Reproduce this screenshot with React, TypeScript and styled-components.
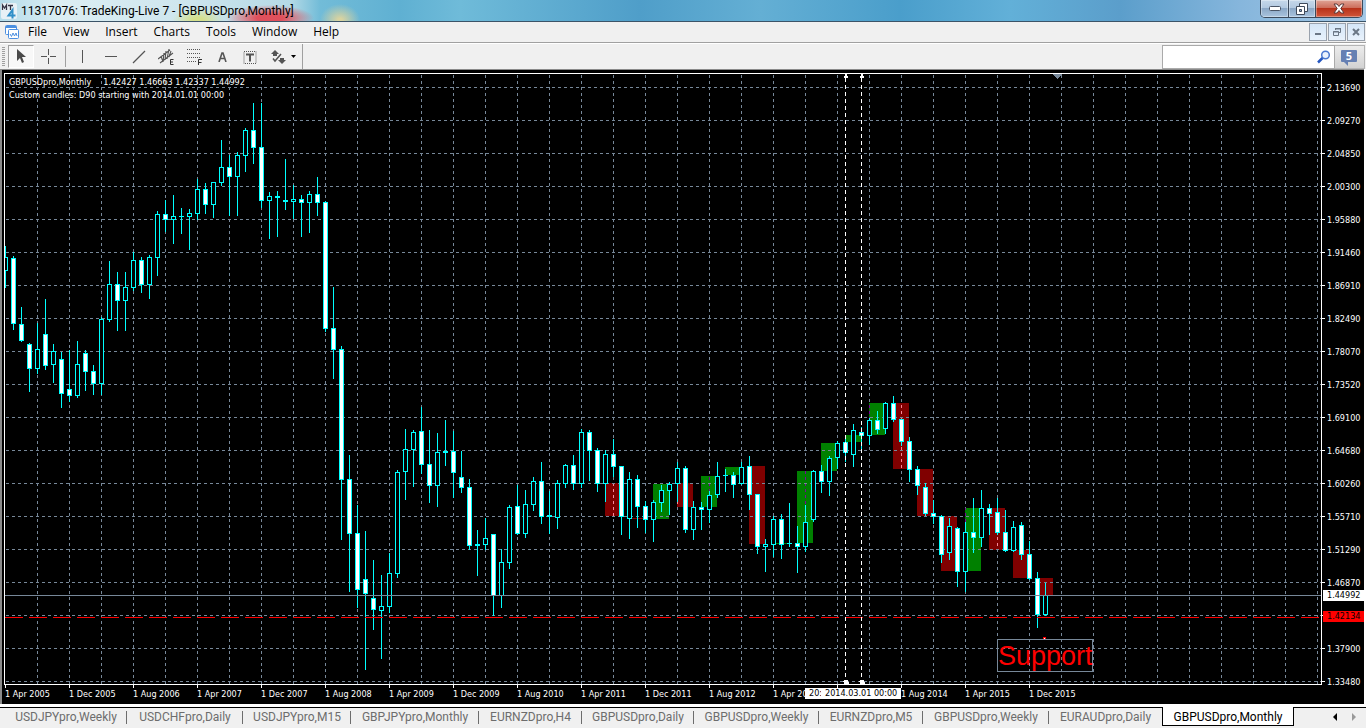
import React from "react";
import styled, { createGlobalStyle } from "styled-components";

/* ---------- data ---------- */

// [high, body top, body bottom, low, filled] for consecutive months, 8px apart
type Candle = [number, number, number, number, 0 | 1];

const candles: Candle[] = [
  [246, 257, 271, 288, 0], [256, 258, 324, 330, 1], [307, 324, 341, 342, 1], [343, 344, 369, 392, 1],
  [323, 349, 369, 374, 0], [299, 334, 366, 370, 1], [344, 351, 365, 383, 0], [352, 359, 394, 408, 1],
  [350, 389, 396, 402, 1], [341, 364, 396, 398, 0], [350, 353, 372, 391, 1], [365, 371, 384, 395, 1],
  [317, 319, 384, 395, 0], [261, 284, 320, 322, 0], [272, 284, 301, 331, 1], [272, 287, 301, 331, 0],
  [252, 260, 288, 291, 0], [257, 260, 285, 293, 1], [255, 257, 285, 299, 0], [211, 214, 258, 276, 0],
  [200, 214, 220, 232, 1], [195, 216, 220, 244, 0], [208, 216, 217, 234, 0], [209, 213, 217, 250, 0],
  [179, 189, 214, 220, 0], [183, 189, 205, 214, 1], [182, 182, 205, 218, 0], [140, 167, 183, 186, 0],
  [155, 167, 177, 216, 1], [152, 155, 177, 216, 0], [128, 130, 156, 172, 0], [103, 130, 148, 164, 1],
  [103, 147, 201, 208, 1], [192, 196, 201, 239, 0], [191, 196, 198, 237, 0], [159, 200, 202, 210, 0],
  [185, 199, 202, 219, 0], [195, 199, 203, 237, 1], [191, 194, 203, 233, 0], [177, 194, 203, 216, 1],
  [201, 202, 329, 332, 1], [287, 328, 350, 379, 1], [346, 349, 480, 540, 1], [455, 479, 534, 592, 1],
  [505, 533, 590, 608, 1], [531, 579, 594, 670, 1], [560, 598, 610, 630, 1], [575, 606, 611, 659, 0],
  [553, 573, 607, 613, 0], [470, 472, 574, 578, 0], [429, 449, 472, 500, 0], [430, 432, 450, 487, 0],
  [407, 431, 465, 474, 1], [430, 464, 486, 503, 1], [433, 452, 486, 507, 0], [420, 451, 453, 466, 0],
  [431, 451, 473, 498, 1], [451, 477, 488, 493, 1], [479, 487, 546, 550, 1], [530, 544, 546, 576, 0],
  [518, 538, 545, 550, 0], [534, 534, 596, 616, 1], [549, 562, 596, 608, 0], [505, 507, 563, 569, 0],
  [485, 506, 534, 535, 1], [490, 504, 534, 538, 0], [477, 481, 505, 511, 0], [462, 481, 517, 524, 1],
  [491, 515, 517, 534, 0], [480, 483, 518, 529, 0], [464, 465, 484, 488, 0], [455, 465, 484, 490, 1],
  [429, 432, 484, 488, 0], [430, 432, 451, 481, 1], [448, 450, 484, 492, 1], [450, 454, 484, 502, 0],
  [439, 454, 467, 477, 1], [466, 466, 517, 535, 1], [472, 479, 519, 539, 0], [475, 479, 507, 528, 1],
  [501, 506, 520, 533, 1], [500, 502, 520, 542, 0], [485, 490, 503, 512, 0], [482, 484, 491, 515, 0],
  [462, 468, 484, 502, 0], [466, 468, 530, 533, 1], [501, 507, 530, 540, 0], [502, 507, 510, 530, 1],
  [491, 495, 510, 523, 0], [462, 476, 495, 498, 0], [469, 475, 476, 492, 0], [472, 475, 485, 498, 1],
  [462, 467, 484, 485, 0], [456, 466, 495, 510, 1], [494, 494, 547, 554, 1], [539, 544, 547, 572, 0],
  [516, 519, 545, 557, 0], [514, 519, 545, 559, 1], [503, 543, 544, 547, 0], [526, 543, 547, 573, 1],
  [505, 522, 547, 552, 0], [470, 471, 520, 522, 0], [465, 471, 482, 493, 1], [456, 458, 482, 496, 0],
  [441, 443, 458, 469, 0], [437, 442, 453, 462, 1], [424, 430, 455, 467, 0], [427, 432, 436, 450, 1],
  [418, 420, 436, 445, 0], [411, 420, 430, 434, 1], [402, 403, 429, 434, 0], [396, 403, 420, 422, 1],
  [419, 419, 442, 446, 1], [437, 441, 470, 482, 1], [466, 469, 486, 495, 1], [483, 487, 514, 516, 1],
  [500, 513, 517, 524, 1], [515, 516, 555, 563, 1], [518, 526, 553, 560, 0], [527, 528, 572, 587, 1],
  [522, 532, 572, 592, 0], [498, 532, 538, 553, 1], [490, 508, 538, 547, 0], [504, 508, 514, 535, 1],
  [498, 512, 533, 535, 1], [510, 532, 551, 552, 1], [521, 527, 551, 552, 0], [522, 525, 555, 560, 1],
  [541, 554, 579, 580, 1], [572, 578, 615, 628, 1], [583, 595, 615, 616, 0],
];

// Quarterly custom candles: [left, top, bottom, rising]
type Quarter = [number, number, number, boolean];

const quarters: Quarter[] = [
  [605, 483, 516, false], [629, 518, 519, false], [653, 484, 519, true], [677, 483, 507, false],
  [701, 476, 507, true], [725, 467, 475, true], [749, 466, 544, false], [773, 543, 544, true],
  [797, 471, 543, true], [821, 443, 471, true], [845, 435, 442, true], [869, 403, 435, true],
  [893, 403, 469, false], [917, 469, 516, false], [941, 516, 571, false], [965, 508, 571, true],
  [989, 508, 550, false], [1013, 550, 578, false], [1037, 578, 595, false],
];

const prices = [
  "2.13690", "2.09270", "2.04850", "2.00300", "1.95880", "1.91460", "1.86910", "1.82490", "1.78070",
  "1.73520", "1.69100", "1.64680", "1.60260", "1.55710", "1.51290", "1.46870", "", "1.37900", "1.33480",
];

const dates = [
  "1 Apr 2005", "1 Dec 2005", "1 Aug 2006", "1 Apr 2007", "1 Dec 2007", "1 Aug 2008", "1 Apr 2009",
  "1 Dec 2009", "1 Aug 2010", "1 Apr 2011", "1 Dec 2011", "1 Aug 2012", "1 Apr 20", "",
  "1 Aug 2014", "1 Apr 2015", "1 Dec 2015",
];

const tabs = [
  { name: "USDJPYpro,Weekly", width: 122 },
  { name: "USDCHFpro,Daily", width: 116 },
  { name: "USDJPYpro,M15", width: 108 },
  { name: "GBPJPYpro,Monthly", width: 128 },
  { name: "EURNZDpro,H4", width: 103 },
  { name: "GBPUSDpro,Daily", width: 112 },
  { name: "GBPUSDpro,Weekly", width: 125 },
  { name: "EURNZDpro,M5", width: 104 },
  { name: "GBPUSDpro,Weekly", width: 126 },
  { name: "EURAUDpro,Daily", width: 113 },
  { name: "GBPUSDpro,Monthly", width: 132 },
];

const menus = ["File", "View", "Insert", "Charts", "Tools", "Window", "Help"];

const GRID = "#778899";
const gridXs = Array.from({ length: 60 }, (_, i) => 37 + i * 32);
const gridYs = Array.from({ length: 19 }, (_, i) => 87 + i * 33);

/* ---------- styles ---------- */

const uiFont = `"Open Sans", "Noto Sans", sans-serif`;
const labelFont = `Roboto, "Open Sans", sans-serif`;
const chartFont = `"DejaVu Sans Condensed", "DejaVu Sans", sans-serif`;

const Global = createGlobalStyle`
  * { box-sizing: border-box; }
  body { margin: 0; background: #f0f0f0; font-family: ${uiFont}; font-size: 12px; color: #000; }
  button, input { font: inherit; color: inherit; margin: 0; padding: 0; }
  svg { display: block; }
`;

const Window = styled.div`
  display: flex;
  flex-direction: column;
  min-height: 100vh;
  overflow: hidden;
`;

const TitleBar = styled.header`
  display: flex;
  align-items: flex-start;
  height: 22px;
  padding: 0 3px 0 1px;
  border-bottom: 1px solid #3c5468;
  background:
    radial-gradient(ellipse 20px 16px at 340px 20px, #d9d3a0 10%, transparent),
    radial-gradient(ellipse 44px 13px at 270px 18px, #e0505c 30%, transparent),
    radial-gradient(ellipse 26px 12px at 198px 20px, #d5e08c 20%, transparent),
    linear-gradient(90deg, #b4dcea 0, #dceef3 60px, #cfe6ee 180px, #b5dae6 290px, #72bcd8 320px, #5fb0d2 400px,
      #6fbbd9 460px, #4f9ec9 640px, #64afd4 760px, #4a9ecb 900px, #62b0d8 1010px, #5b9ecb 1120px, #86b6dc 1240px, #a4c8e6 100%);
`;

const AppIcon = styled.svg`
  flex: none;
  width: 16px;
  height: 16px;
  margin: 3px 4px 0 0;
`;

const Title = styled.h1`
  flex: 1;
  margin: 0;
  font-family: ${labelFont};
  font-size: 12px;
  line-height: 22px;
  font-weight: 400;
  white-space: nowrap;
`;

const WindowButtons = styled.div`
  display: flex;
  border: 1px solid #3b4a5c;
  border-top: 0;
  border-radius: 0 0 5px 5px;
  overflow: hidden;
`;

const WindowButton = styled.button<{ $danger?: boolean }>`
  display: grid;
  place-items: center;
  width: ${(p) => (p.$danger ? 47 : 27)}px;
  height: 17px;
  border: 0;
  box-shadow: inset 0 0 0 1px rgba(255, 255, 255, 0.35);
  background: ${(p) =>
    p.$danger
      ? "linear-gradient(#e0a597 0, #cd6e5c 45%, #b8321a 50%, #d0563a 100%)"
      : "linear-gradient(#c6d8ea 0, #b3c9e0 45%, #8ca8c6 50%, #a9c4de 100%)"};

  & + & {
    border-left: 1px solid #3b4a5c;
  }
`;

const MenuBar = styled.nav`
  display: flex;
  align-items: center;
  height: 21px;
  padding: 0 1px 0 5px;
  border-bottom: 1px solid #a0a0a0;
  background: #f0f0f0;
`;

const MenuList = styled.ul`
  display: flex;
  flex: 1;
  gap: 16px;
  margin: 0 0 0 9px;
  padding: 0;
  list-style: none;
`;

const MenuButton = styled.button`
  display: block;
  border: 0;
  background: none;
  line-height: 18px;
`;

const ChildButtons = styled.div`
  display: flex;
  gap: 1px;
`;

const ChildButton = styled.button`
  display: grid;
  place-items: center;
  width: 18px;
  height: 18px;
  border: 1px solid #9aa2ad;
  background: linear-gradient(#d5e6f7, #e8f2fc);
`;

const Toolbar = styled.div`
  display: flex;
  align-items: center;
  height: 26px;
  padding-right: 1px;
  border-top: 1px solid #fff;
  background: #f0f0f0;
`;

const Grip = styled.div`
  width: 3px;
  height: 20px;
  margin: 0 3px 0 2px;
  background: repeating-linear-gradient(#a0a0a0 0 1px, transparent 1px 2px);
`;

const ToolButton = styled.button<{ $active?: boolean }>`
  display: grid;
  place-items: center;
  width: ${(p) => (p.$active ? 26 : 28)}px;
  height: 23px;
  border: ${(p) => (p.$active ? 1 : 0)}px solid;
  border-color: #a0a0a0 #fff #fff #a0a0a0;
  background: ${(p) => (p.$active ? "#f8f8f8" : "none")};
`;

const Caret = styled.button`
  display: grid;
  place-items: center;
  width: 8px;
  height: 23px;
  margin-left: -3px;
  border: 0;
  background: none;
`;

const Divider = styled.div<{ $tall?: boolean }>`
  width: 1px;
  height: ${(p) => (p.$tall ? 25 : 21)}px;
  margin: 0 2px 0 ${(p) => (p.$tall ? 5 : 3)}px;
  background: #a0a0a0;
`;

const Search = styled.div`
  display: flex;
  align-items: center;
  width: 173px;
  height: 24px;
  margin-left: auto;
  padding-right: 3px;
  border: 1px solid #aaa;
  background: #fff;
`;

const SearchInput = styled.input`
  flex: 1;
  min-width: 0;
  border: 0;
  outline: 0;
  padding: 0 4px;
  background: none;
`;

const PlainButton = styled.button`
  display: grid;
  place-items: center;
  border: 0;
  background: none;
`;

const ChatButton = styled.button`
  display: grid;
  place-items: center;
  width: 30px;
  height: 24px;
  padding: 0 1px 2px 0;
  border: 1px solid #b4b4b4;
  border-left: 0;
  background: linear-gradient(#ececec, #d2d2d2);
`;

const Bubble = styled.span`
  position: relative;
  display: block;
  width: 16px;
  height: 12px;
  border-radius: 1px;
  background: #6680b3;
  color: #fff;
  font-size: 11px;
  line-height: 12px;
  font-weight: 700;
  text-align: center;

  &::after {
    content: "";
    position: absolute;
    left: 3px;
    top: 12px;
    border: solid transparent;
    border-width: 0 0 4px 4px;
    border-top: 4px solid #6680b3;
    border-bottom: 0;
  }
`;

const ChartFrame = styled.main`
  display: grid;
  grid-template-columns: minmax(0, 1fr) 42px;
  grid-template-rows: minmax(0, 1fr) 19px;
  flex: 1;
  margin-right: 2px;
  padding: 3px 0 0 2px;
  border-top: 1px solid #8a8a8a;
  border-left: 2px solid #8a8a8a;
  box-shadow: 2px 0 #fff;
  background: #000;
  color: #fff;
  font-family: ${chartFont};
  font-size: 9px;
  line-height: 12px;
`;

const Plot = styled.section`
  position: relative;
  border: 1px solid #fff;
  overflow: hidden;
`;

const Drawing = styled.svg`
  position: absolute;
  inset: 0;
  width: 100%;
  height: 100%;
  shape-rendering: crispEdges;
`;

const ChartHeading = styled.div`
  position: absolute;
  top: 2px;
  left: 4px;
  line-height: 13px;
  white-space: nowrap;
`;

const HeadingRow = styled.p`
  display: flex;
  gap: 12px;
  margin: 0;
`;

const SupportLabel = styled.div`
  position: absolute;
  left: 992px;
  top: 565px;
  width: 96px;
  height: 33px;
  border: 1px solid ${GRID};
  color: #f00;
  font-family: "Liberation Sans", Arial, sans-serif;
  font-size: 27px;
  line-height: 32px;
  text-align: center;
  white-space: nowrap;
`;

const PriceAxis = styled.ol`
  position: relative;
  margin: 0 0 -20px;
  padding: 0;
  list-style: none;
`;

const PriceTick = styled.li`
  display: flex;
  align-items: center;
  gap: 2px;
  height: 33px;
  margin: -2px 0 2px;

  &::before {
    content: "";
    width: 3px;
    height: 1px;
    background: #fff;
  }
`;

const PriceBadge = styled.div<{ $top: number; $alert?: boolean }>`
  position: absolute;
  top: ${(p) => p.$top}px;
  left: 1px;
  width: 41px;
  height: 11px;
  padding-left: 4px;
  line-height: 11px;
  background: ${(p) => (p.$alert ? "#f00" : "#fff")};
  color: #000;
`;

const TimeAxis = styled.ol`
  position: relative;
  display: flex;
  grid-column: 1 / -1;
  margin: 0 0 0 1px;
  padding: 0;
  list-style: none;
`;

const TimeTick = styled.li`
  flex: none;
  width: 64px;
  white-space: nowrap;

  &::before {
    content: "";
    display: block;
    width: 1px;
    height: 3px;
    background: #fff;
  }
`;

const TimeBadge = styled.div<{ $left: number; $width: number }>`
  position: absolute;
  top: 3px;
  left: ${(p) => p.$left}px;
  width: ${(p) => p.$width}px;
  height: 11px;
  padding-left: 4px;
  line-height: 11px;
  background: #fff;
  color: #000;
  white-space: nowrap;
`;

const TabStrip = styled.footer`
  display: flex;
  height: 24px;
  padding: 3px 5px 2px 5px;
  background: linear-gradient(#fff 0 3px, #000 3px 4px, #f0f0f0 4px);
`;

const Tab = styled.button<{ $w: number; $selected?: boolean; $last?: boolean }>`
  flex: none;
  width: ${(p) => p.$w}px;
  padding-top: ${(p) => (p.$selected ? 2 : 1)}px;
  border: 0;
  font-family: ${labelFont};
  line-height: 16px;
  text-align: center;
  white-space: nowrap;
  color: ${(p) => (p.$selected ? "#000" : "#6d6d6d")};
  background: ${(p) =>
    p.$selected
      ? "#fff"
      : p.$last
        ? "none"
        : "linear-gradient(#6d6d6d, #6d6d6d) no-repeat right 4px / 1px 13px"};
  ${(p) => p.$selected && "border: 1px solid #000; border-top: 0;"}
`;

const TabArrows = styled.div`
  display: flex;
  align-items: center;
  gap: 14px;
  margin-left: auto;
  padding-right: 4px;
`;

/* ---------- drawing parts ---------- */

function CandleMark({ index, data }: { index: number; data: Candle }) {
  const [high, top, bottom, low, filled] = data;
  const x = 5 + index * 8;
  return (
    <g fill="#0ff">
      <rect x={x} y={high} width={1} height={low - high} />
      <rect x={x - 2} y={top} width={5} height={bottom - top} />
      {bottom - top > 2 && (
        <rect x={x - 1} y={top + 1} width={3} height={bottom - top - 2} fill={filled ? "#fff" : "#000"} />
      )}
    </g>
  );
}

function ChartDrawing() {
  return (
    <Drawing role="img" aria-label="GBPUSDpro monthly candlestick chart">
      <g transform="translate(-5 -74)">
        {quarters.map(([x, top, bottom, up]) => (
          <rect key={x} x={x} y={top} width={16} height={bottom - top} fill={up ? "#008000" : "#800000"} />
        ))}
        <g stroke={GRID} strokeDasharray="3 3">
          {gridXs.map((x) => (
            <line key={x} x1={x + 0.5} x2={x + 0.5} y1={75} y2="150%" />
          ))}
        </g>
        {quarters.map(([x, top, bottom, up]) => {
          const gx = gridXs.find((g) => g >= x && g < x + 16);
          return gx === undefined ? null : (
            <line
              key={x}
              x1={gx + 0.5}
              x2={gx + 0.5}
              y1={top}
              y2={bottom}
              stroke={up ? "#770899" : "#f78899"}
              strokeDasharray="3 3"
              strokeDashoffset={(top - 75) % 6}
            />
          );
        })}
        <g stroke={GRID} strokeDasharray="3 3">
          {gridYs.map((y) => (
            <line key={y} x1={6} x2="150%" y1={y + 0.5} y2={y + 0.5} />
          ))}
        </g>
        {candles.map((c, i) => (
          <CandleMark key={i} index={i} data={c} />
        ))}
        <line x1={5} x2="150%" y1={595.5} y2={595.5} stroke={GRID} />
        <line x1={5} x2="150%" y1={617.5} y2={617.5} stroke="#f00" strokeDasharray="18 6" />
        <g stroke="#fff" strokeDasharray="4 3">
          <line x1={845.5} x2={845.5} y1={78} y2={680} />
          <line x1={861.5} x2={861.5} y1={78} y2={680} />
        </g>
        <g fill="#fff">
          {[845, 861].map((x) => (
            <React.Fragment key={x}>
              <path d={`M${x} 74h2v2h1v2h-4v-2h1z`} />
              <path d={`M${x - 1} 680h4v2h1v2h-5v-2h-1z`} />
            </React.Fragment>
          ))}
        </g>
        <path d="M1052 74h10l-5 5z" fill={GRID} />
        <path d="M1043 637h3v3h-3z" fill="#f00" />
        <path d="M1044 638h1v1h-1z" fill="#fff" />
      </g>
    </Drawing>
  );
}

const G = "#555";

const tools: { name: string; icon: React.ReactNode }[] = [
  { name: "Vertical line", icon: <path d="M8.5 2v13" stroke={G} /> },
  { name: "Horizontal line", icon: <path d="M3 8.5h12" stroke={G} /> },
  { name: "Trend line", icon: <path d="M3 15L15 3" stroke={G} strokeWidth="1.2" /> },
  {
    name: "Equidistant channel",
    icon: (
      <>
        <path d="M0 11L12 2M2 15L15 5M3 8l2 6M6 5l-1 9M8 3l-1 9M11 1l-2 10M13 3l-2 6" stroke={G} strokeWidth="1.1" />
        <path d="M15.500 11.500h-3v5h3M12.500 14h2.500" stroke="#333" />
      </>
    ),
  },
  {
    name: "Fibonacci retracement",
    icon: (
      <>
        <path d="M1 1.500h14M1 5.500h14M1 9.500h14M1 13.500h9" stroke={G} strokeDasharray="1 1" />
        <path d="M12.500 17v-5.500h3.500M12.500 14.500h3" stroke="#333" />
      </>
    ),
  },
];

function App() {
  return (
    <Window>
      <Global />
      <TitleBar>
        <AppIcon viewBox="0 0 16 16" aria-hidden="true">
          <rect width="16" height="16" rx="2" fill="#e8f1f6" />
          <path d="M1.500 7V2l2 3 2-3v5M7 2.500h5M9.500 2.500V7" fill="none" stroke="#334" strokeWidth="1.300" />
          <path d="M11.500 15.500V7L7.500 12.500h7" fill="none" stroke="#2f8fc8" strokeWidth="2" />
        </AppIcon>
        <Title>11317076: TradeKing-Live 7 - [GBPUSDpro,Monthly]</Title>
        <WindowButtons>
          <WindowButton aria-label="Minimize">
            <svg width="12" height="5">
              <rect x=".5" y=".5" width="11" height="4" rx="1" fill="#fff" stroke="#4a5566" />
            </svg>
          </WindowButton>
          <WindowButton aria-label="Restore">
            <svg width="12" height="12" fill="#fff" stroke="#3f4a5a">
              <path d="M3.500.500h8v8h-8z" />
              <path d="M.500 3.500h8v8h-8z" />
              <path d="M3.500 6.500h2v2h-2z" fill="#8ca8c6" />
            </svg>
          </WindowButton>
          <WindowButton aria-label="Close" $danger>
            <svg width="12" height="11">
              <path d="M1 1h3l2 2.500L8 1h3L7.800 5.500 11 10H8L6 7.500 4 10H1l3.200-4.500z" fill="#fff" stroke="#5c3a3a" />
            </svg>
          </WindowButton>
        </WindowButtons>
      </TitleBar>

      <MenuBar>
        <svg width="14" height="14" viewBox="0 0 14 14" fill="#fff" stroke="#4c8fe0" aria-hidden="true">
          <rect x=".5" y=".5" width="11" height="9" rx="1" />
          <path d="M1 2h10" strokeWidth="2" />
          <rect x="3.500" y="4.500" width="10" height="9" rx="1" />
          <path d="M5 9l1.500 2.500L8 8l1.500 3L11 8l1 3" fill="none" />
        </svg>
        <MenuList>
          {menus.map((m) => (
            <li key={m}>
              <MenuButton>{m}</MenuButton>
            </li>
          ))}
        </MenuList>
        <ChildButtons>
          <ChildButton aria-label="Minimize chart">
            <svg width="8" height="8">
              <path d="M1 6h6" stroke="#6b7785" strokeWidth="2" />
            </svg>
          </ChildButton>
          <ChildButton aria-label="Restore chart">
            <svg width="8" height="8" fill="none" stroke="#6b7785">
              <path d="M2.500 2V1h5v3.500H6M2 .500h6M.500 3.500h5v4h-5zM0 4h6" />
            </svg>
          </ChildButton>
          <ChildButton aria-label="Close chart">
            <svg width="8" height="8">
              <path d="M1 1l6 6M7 1L1 7" stroke="#6b7785" strokeWidth="2" />
            </svg>
          </ChildButton>
        </ChildButtons>
      </MenuBar>

      <Toolbar>
        <Grip />
        <ToolButton $active aria-label="Cursor">
          <svg width="10" height="15">
            <path d="M1 0v12l3-3 2 5 2-1-2-5h4z" fill="#4a4a4a" />
          </svg>
        </ToolButton>
        <ToolButton aria-label="Crosshair">
          <svg width="15" height="15" stroke={G}>
            <path d="M7.500 0v6M7.500 9v6M0 7.500h6M9 7.500h6" />
          </svg>
        </ToolButton>
        <Divider />
        {tools.map((t) => (
          <ToolButton key={t.name} aria-label={t.name}>
            <svg width="17" height="17" fill="none">
              {t.icon}
            </svg>
          </ToolButton>
        ))}
        <ToolButton aria-label="Text">
          <svg width="9" height="10" fill="none" stroke={G} strokeWidth="1.600">
            <path d="M1 10L4 1h1L8 10M2.500 6.500h4" />
          </svg>
        </ToolButton>
        <ToolButton aria-label="Text label">
          <svg width="14" height="14" fill="none" stroke={G}>
            <path d="M1 1.500h12v12H1z" strokeDasharray="1 1" />
            <path d="M3 4.500h8M7 4v7.500" strokeWidth="2" />
          </svg>
        </ToolButton>
        <ToolButton aria-label="Arrows">
          <svg width="15" height="14" fill={G}>
            <path d="M4 0l4 4H6v2H2V4H0zM9 8h4v2h2l-4 4-4-4h2z" />
            <path d="M2 8.500l2 2.500 6-7" fill="none" stroke={G} strokeWidth="1.500" />
          </svg>
        </ToolButton>
        <Caret aria-label="More arrows">
          <svg width="5" height="3">
            <path d="M0 0h5L2.500 3z" />
          </svg>
        </Caret>
        <Divider $tall />
        <Search>
          <SearchInput aria-label="Search" />
          <PlainButton aria-label="Find">
            <svg width="14" height="14" fill="none">
              <circle cx="8.500" cy="5" r="3.800" stroke="#4a78d0" strokeWidth="1.500" fill="#e9f1fd" />
              <path d="M5.500 8L1 12.500" stroke="#2456c0" strokeWidth="2.500" />
            </svg>
          </PlainButton>
        </Search>
        <ChatButton aria-label="Messages">
          <Bubble>5</Bubble>
        </ChatButton>
      </Toolbar>

      <ChartFrame>
        <Plot>
          <ChartDrawing />
          <ChartHeading>
            <HeadingRow>
              <span>GBPUSDpro,Monthly</span>
              <span>1.42427 1.46663 1.42337 1.44992</span>
            </HeadingRow>
            <HeadingRow>Custom candles: D90 starting with 2014.01.01 00:00</HeadingRow>
          </ChartHeading>
          <SupportLabel>Support</SupportLabel>
        </Plot>
        <PriceAxis>
          {prices.map((p, i) => (
            <PriceTick key={i}>{p}</PriceTick>
          ))}
          <PriceBadge $top={517}>1.44992</PriceBadge>
          <PriceBadge $top={538} $alert>
            1.42134
          </PriceBadge>
        </PriceAxis>
        <TimeAxis>
          {dates.map((d, i) => (
            <TimeTick key={i}>{d}</TimeTick>
          ))}
          <TimeBadge $left={800} $width={18}>
            20:
          </TimeBadge>
          <TimeBadge $left={816} $width={80}>
            2014.03.01 00:00
          </TimeBadge>
        </TimeAxis>
      </ChartFrame>

      <TabStrip>
        {tabs.map((t, i) => (
          <Tab key={i} $w={t.width} $selected={i === tabs.length - 1} $last={i === tabs.length - 2}>
            {t.name}
          </Tab>
        ))}
        <TabArrows>
          <PlainButton aria-label="Scroll tabs left">
            <svg width="5" height="8">
              <path d="M4 0v8L0 4z" fill="#000" />
            </svg>
          </PlainButton>
          <PlainButton aria-label="Scroll tabs right">
            <svg width="5" height="8">
              <path d="M0 0v8l4-4z" fill="#999" />
            </svg>
          </PlainButton>
        </TabArrows>
      </TabStrip>
    </Window>
  );
}

export default App;
